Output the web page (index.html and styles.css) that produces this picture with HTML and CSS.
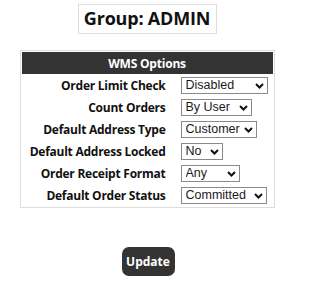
FILE: index.html
```html
<!DOCTYPE html>
<html>
<head>
<meta charset="utf-8">
<link rel="stylesheet" href="styles.css">
</head>
<body>
<div class="page">
  <h1 class="title">Group: ADMIN</h1>
  <div class="panel">
    <table class="opts">
      <colgroup><col class="c-lbl"><col class="c-val"></colgroup>
      <thead>
        <tr><th colspan="2" class="head">WMS Options</th></tr>
      </thead>
      <tbody>
        <tr>
          <td class="lbl">Order Limit Check</td>
          <td class="val"><span class="selwrap"><select class="sel w-disabled"><option>Disabled</option><option>Enabled</option></select><svg class="chev" viewBox="0 0 9 6"><path d="M1 1 L4.5 4.5 L8 1" /></svg></span></td>
        </tr>
        <tr>
          <td class="lbl">Count Orders</td>
          <td class="val"><span class="selwrap"><select class="sel w-byuser"><option>By User</option><option>By Group</option></select><svg class="chev" viewBox="0 0 9 6"><path d="M1 1 L4.5 4.5 L8 1" /></svg></span></td>
        </tr>
        <tr>
          <td class="lbl">Default Address Type</td>
          <td class="val"><span class="selwrap"><select class="sel w-customer"><option>Customer</option><option>Billing</option></select><svg class="chev" viewBox="0 0 9 6"><path d="M1 1 L4.5 4.5 L8 1" /></svg></span></td>
        </tr>
        <tr>
          <td class="lbl">Default Address Locked</td>
          <td class="val"><span class="selwrap"><select class="sel w-no"><option>No</option><option>Yes</option></select><svg class="chev" viewBox="0 0 9 6"><path d="M1 1 L4.5 4.5 L8 1" /></svg></span></td>
        </tr>
        <tr>
          <td class="lbl">Order Receipt Format</td>
          <td class="val"><span class="selwrap"><select class="sel w-any"><option>Any</option><option>Email</option></select><svg class="chev" viewBox="0 0 9 6"><path d="M1 1 L4.5 4.5 L8 1" /></svg></span></td>
        </tr>
        <tr>
          <td class="lbl">Default Order Status</td>
          <td class="val"><span class="selwrap"><select class="sel w-committed"><option>Committed</option><option>Pending</option></select><svg class="chev" viewBox="0 0 9 6"><path d="M1 1 L4.5 4.5 L8 1" /></svg></span></td>
        </tr>
      </tbody>
    </table>
  </div>
  <button class="btn">Update</button>
</div>
</body>
</html>
```

FILE: styles.css
```css
html, body {
  margin: 0;
  padding: 0;
  background: #ffffff;
}
body {
  font-family: "Open Sans", "Liberation Sans", sans-serif;
  color: #111;
}
.page {
  width: 300px;
  display: flex;
  flex-direction: column;
  align-items: center;
  padding-top: 4px;
  margin-left: -3px;
}
.title {
  margin: 0;
  box-sizing: border-box;
  width: 139px;
  height: 30px;
  border: 1px solid #dddddd;
  font-size: 18px;
  font-weight: 700;
  line-height: 27px;
  text-align: center;
  color: #111;
  white-space: nowrap;
  letter-spacing: -0.2px;
}
.panel {
  margin-top: 16px;
  box-sizing: border-box;
  width: 255px;
  border: 1px solid #dddddd;
  padding: 1px;
}
.opts {
  width: 100%;
  border-collapse: collapse;
  table-layout: fixed;
}
.c-val {
  width: 92px;
}
.head {
  background: #333333;
  color: #ffffff;
  font-size: 12px;
  font-weight: 700;
  height: 22px;
  padding: 0;
  text-align: center;
  letter-spacing: -0.2px;
}
.lbl {
  text-align: right;
  font-size: 12px;
  font-weight: 700;
  padding: 0 15px 0 0;
  height: 22px;
  white-space: nowrap;
  color: #111;
  letter-spacing: -0.25px;
}
.val {
  padding: 0;
  vertical-align: middle;
}
.selwrap {
  position: relative;
  display: block;
  width: max-content;
}
.sel {
  -webkit-appearance: none;
  appearance: none;
  font-family: "Liberation Sans", Arial, sans-serif;
  font-size: 12.5px;
  line-height: 15px;
  height: 17px;
  padding: 0 0 0 4px;
  border: 1px solid #8a8a8a;
  border-radius: 0;
  background: #fff;
  color: #1a1a1a;
  box-sizing: border-box;
  display: block;
  margin: 0;
}
.chev {
  position: absolute;
  right: 4px;
  top: 6px;
  width: 9px;
  height: 6px;
  pointer-events: none;
}
.chev path {
  fill: none;
  stroke: #111;
  stroke-width: 2;
}
.w-disabled { width: 87px; }
.w-byuser { width: 71px; }
.w-customer { width: 76px; }
.w-no { width: 42px; }
.w-any { width: 59px; }
.w-committed { width: 86px; }
.btn {
  margin-top: 39px;
  margin-left: 2px;
  width: 53px;
  height: 29px;
  border: none;
  border-radius: 7px;
  background: #333333;
  color: #ffffff;
  font-family: "Open Sans", sans-serif;
  font-size: 12px;
  font-weight: 700;
  padding: 0;
}
```
